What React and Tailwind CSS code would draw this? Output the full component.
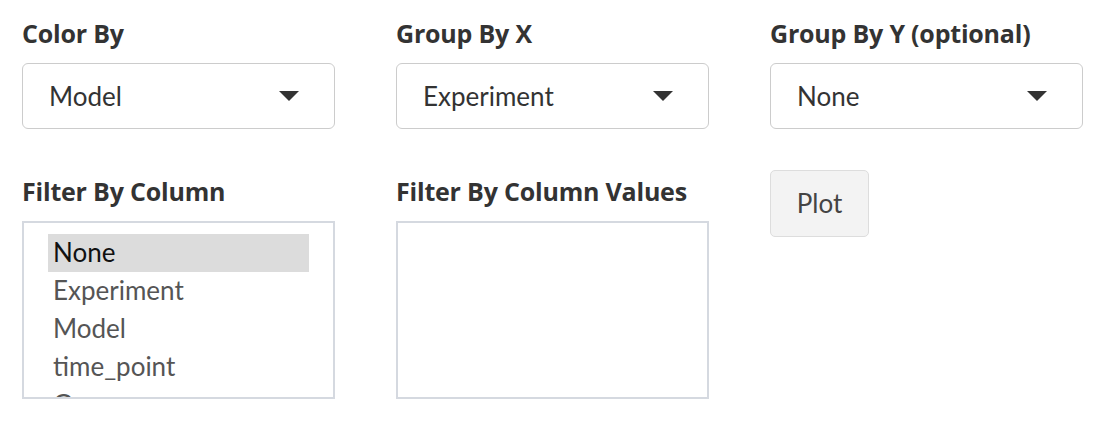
export default function App() {
  const columns = ["None", "Experiment", "Model", "time_point", "Group"];
  const label = "mb-[15px] text-[25px] font-bold leading-[30px] text-[#333333] font-['Open_Sans',sans-serif] tracking-[-0.2px]";

  const Select = ({ value }) => (
    <div className="flex h-[66px] items-center justify-between rounded-[6px] border border-[#cccccc] bg-white pl-[26px] pr-[35px] text-[26px] text-[#333333]">
      <span>{value}</span>
      <svg width="20" height="10" viewBox="0 0 20 10">
        <path d="M0 0 L20 0 L10 10 Z" fill="#333333" />
      </svg>
    </div>
  );

  return (
    <div
      className="min-h-[444px] bg-white pl-[22px] pt-[18px]"
      style={{ fontFamily: "Lato, 'Liberation Sans', sans-serif" }}
    >
      <div className="grid grid-cols-[313px_313px_313px] gap-x-[61px] gap-y-[41px]">
        <div>
          <div className={label}>Color By</div>
          <Select value="Model" />
        </div>
        <div>
          <div className={label}>Group By X</div>
          <Select value="Experiment" />
        </div>
        <div>
          <div className={label}>Group By Y (optional)</div>
          <Select value="None" />
        </div>

        <div className="pt-[6px]">
          <div className={label}>Filter By Column</div>
          <div className="h-[178px] overflow-hidden border-2 border-[#d5d9e0] px-[24px] pt-[11px]">
            {columns.map((c, i) => (
              <div
                key={c}
                className={
                  "h-[38px] px-[5px] text-[26px] leading-[37px] " +
                  (i === 0 ? "bg-[#dcdcdc] text-[#111111]" : "text-[#555555]")
                }
              >
                {c}
              </div>
            ))}
          </div>
        </div>
        <div className="pt-[6px]">
          <div className={label}>Filter By Column Values</div>
          <div className="h-[178px] border-2 border-[#d5d9e0]"></div>
        </div>
        <div>
          <button className="h-[67px] w-[99px] rounded-[5px] border border-[#dddddd] bg-[#f3f3f3] text-[26px] text-[#444444]">
            Plot
          </button>
        </div>
      </div>
    </div>
  );
}
